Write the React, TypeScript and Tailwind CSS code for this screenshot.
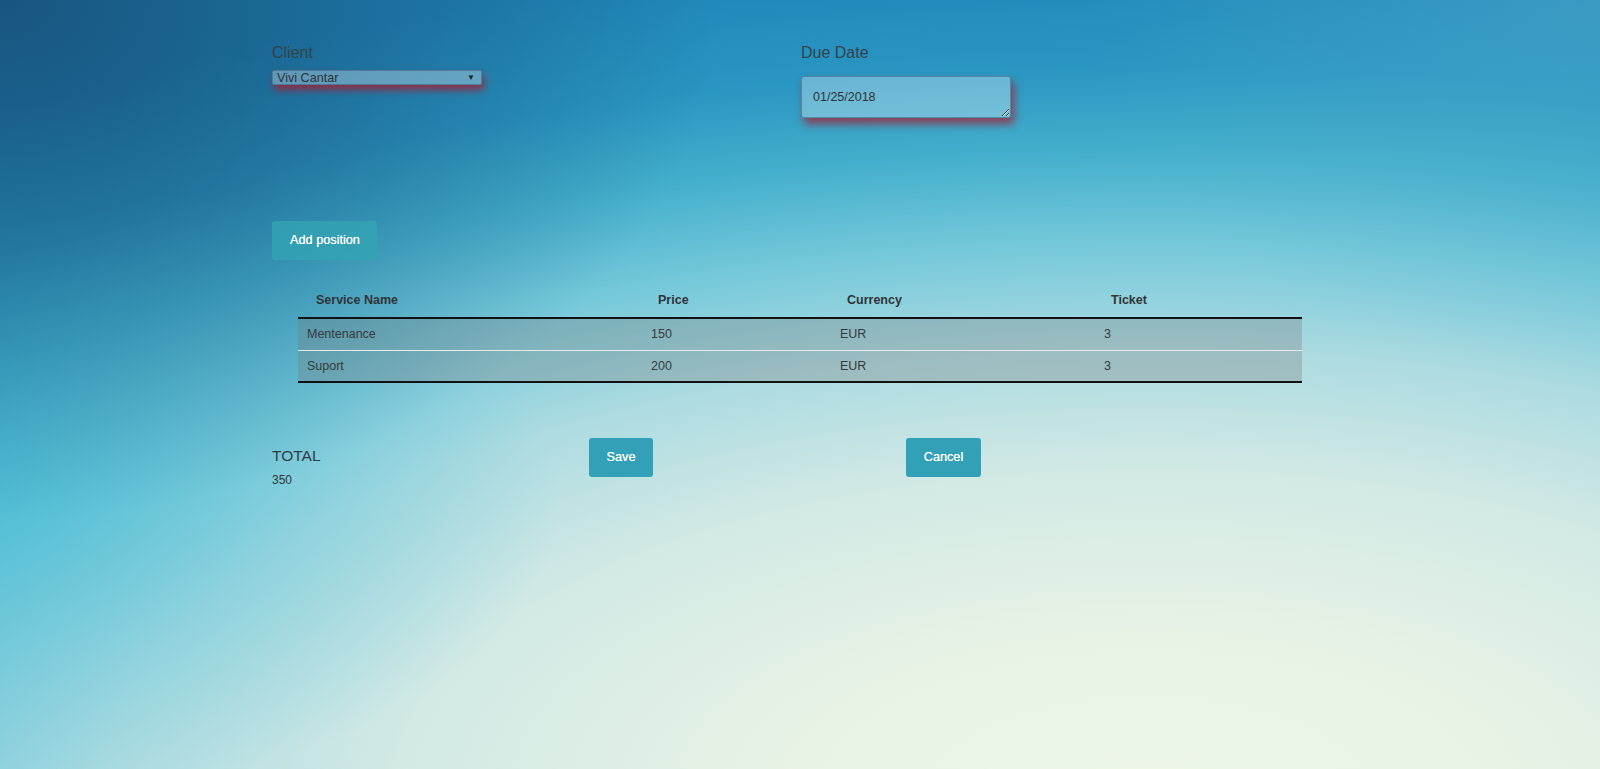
import React from "react";

const rows = [
  { name: "Mentenance", price: "150", currency: "EUR", ticket: "3" },
  { name: "Suport", price: "200", currency: "EUR", ticket: "3" },
];

export default function App() {
  return (
    <div className="min-h-[769px] w-full font-['Liberation_Sans',Arial,sans-serif] bg-[radial-gradient(ellipse_720px_520px_at_0px_0px,rgba(22,72,112,0.78),rgba(22,72,112,0)),radial-gradient(ellipse_520px_360px_at_100%_0%,rgba(90,175,205,0.45),rgba(90,175,205,0)),radial-gradient(ellipse_560px_300px_at_0px_500px,rgba(60,185,212,0.55),rgba(60,185,212,0)),radial-gradient(ellipse_1800px_760px_at_1150px_790px,#eef7e6_0%,#e8f3e5_20%,#d2e9e5_42%,#acdbe1_58%,#74c8da_72%,#44afcc_84%,#2a96c2_95%,#1f86b8_110%)]">
      <div className="ml-[272px] w-[1056px] pt-[44px]">
        {/* top form */}
        <div className="grid grid-cols-[529px_1fr]">
          <div>
            <div className="text-[16px] leading-[18px] text-[#34434c]">Client</div>
            <div className="mt-[8px] flex h-[15px] w-[210px] items-center justify-between rounded-[2px] border border-[rgba(70,100,125,0.6)] bg-white/30 pl-[4px] pr-[6px] text-[12.6px] leading-[12px] text-[#2d3338] shadow-[2px_5px_7px_rgba(165,30,50,0.8)]">
              <span>Vivi Cantar</span>
              <span className="text-[8px] leading-[8px] text-[#222]">▼</span>
            </div>
          </div>
          <div>
            <div className="text-[16px] leading-[18px] text-[#34434c]">Due Date</div>
            <textarea
              readOnly
              defaultValue="01/25/2018"
              className="mt-[14px] block h-[42px] w-[210px] resize rounded-[3px] border border-[rgba(60,95,120,0.55)] bg-white/30 px-[11px] pt-[13px] text-[12.5px] leading-[15px] text-[#2d3338] outline-none shadow-[3px_6px_8px_rgba(165,30,50,0.75)]"
            />
          </div>
        </div>

        {/* add position */}
        <button className="mt-[103px] h-[39px] w-[105px] rounded-[3px] bg-[rgba(52,162,180,0.85)] pl-[1px] text-[12.7px] text-white [text-shadow:0_0_0.4px_#fff]">
          Add position
        </button>

        {/* table */}
        <div className="mx-[26px] mt-[21px] text-[12.5px]">
          <div className="grid h-[36px] grid-cols-[344px_189px_264px_207px] items-center pt-[2px] font-bold text-[#2f3438]">
            <div className="pl-[18px]">Service Name</div>
            <div className="pl-[16px]">Price</div>
            <div className="pl-[16px]">Currency</div>
            <div className="pl-[16px]">Ticket</div>
          </div>
          <div className="border-y-2 border-[#111]">
            {rows.map((r, i) => (
              <div
                key={r.name}
                className={`grid h-[31px] grid-cols-[344px_189px_264px_207px] items-center bg-[rgba(120,120,120,0.3)] text-[#343a3e] ${
                  i > 0 ? "border-t border-[#e6ecec]" : ""
                }`}
              >
                <div className="pl-[9px]">{r.name}</div>
                <div className="pl-[9px]">{r.price}</div>
                <div className="pl-[9px]">{r.currency}</div>
                <div className="pl-[9px]">{r.ticket}</div>
              </div>
            ))}
          </div>
        </div>

        {/* totals + actions */}
        <div className="mt-[55px] grid grid-cols-[317px_317px_1fr] items-start">
          <div className="pt-[9px]">
            <div className="text-[15.5px] leading-[18px] text-[#2e3d46]">TOTAL</div>
            <div className="mt-[8px] text-[12px] leading-[14px] text-[#2f3438]">350</div>
          </div>
          <div>
            <button className="h-[39px] w-[64px] rounded-[3px] bg-[#32a0b6] text-[12.7px] text-white [text-shadow:0_0_0.4px_#fff]">
              Save
            </button>
          </div>
          <div>
            <button className="h-[39px] w-[75px] rounded-[3px] bg-[#32a0b6] text-[12.7px] text-white [text-shadow:0_0_0.4px_#fff]">
              Cancel
            </button>
          </div>
        </div>
      </div>
    </div>
  );
}
